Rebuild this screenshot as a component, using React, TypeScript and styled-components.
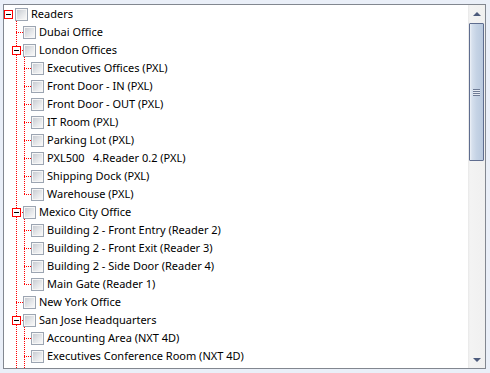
import React from 'react';
import styled, { createGlobalStyle, css } from 'styled-components';

const Global = createGlobalStyle`
  html, body { margin: 0; padding: 0; background: #eaeff8; }
  body { font-family: 'Noto Sans', 'Segoe UI', sans-serif; }
  * { box-sizing: border-box; }
`;

type TreeNode = { label: string; expanded?: boolean; children?: TreeNode[] };

const data: TreeNode = {
  label: 'Readers',
  expanded: true,
  children: [
    { label: 'Dubai Office' },
    {
      label: 'London Offices',
      expanded: true,
      children: [
        { label: 'Executives Offices (PXL)' },
        { label: 'Front Door - IN (PXL)' },
        { label: 'Front Door - OUT (PXL)' },
        { label: 'IT Room (PXL)' },
        { label: 'Parking Lot (PXL)' },
        { label: 'PXL500   4.Reader 0.2 (PXL)' },
        { label: 'Shipping Dock (PXL)' },
        { label: 'Warehouse (PXL)' },
      ],
    },
    {
      label: 'Mexico City Office',
      expanded: true,
      children: [
        { label: 'Building 2 - Front Entry (Reader 2)' },
        { label: 'Building 2 - Front Exit (Reader 3)' },
        { label: 'Building 2 - Side Door (Reader 4)' },
        { label: 'Main Gate (Reader 1)' },
      ],
    },
    { label: 'New York Office' },
    {
      label: 'San Jose Headquarters',
      expanded: true,
      children: [
        { label: 'Accounting Area (NXT 4D)' },
        { label: 'Executives Conference Room (NXT 4D)' },
        { label: 'Front Lobby (NXT 4D)' },
      ],
    },
    { label: 'Tokyo Office' },
  ],
};

const DOT = '#ff0000';
const vDots = `repeating-linear-gradient(to bottom, ${DOT} 0 1px, transparent 1px 2px)`;
const hDots = `repeating-linear-gradient(to right, ${DOT} 0 1px, transparent 1px 2px)`;

const Page = styled.div`
  height: 373px;
  padding: 4px 4px 4px 3px;
`;

const Frame = styled.div`
  display: flex;
  height: 100%;
  border: 1px solid #828790;
  background: #ffffff;
`;

const TreeView = styled.div`
  flex: 1;
  overflow: hidden;
  color: #000;
  font-size: 11px;
`;

const Row = styled.div`
  display: flex;
  height: 18px;
`;

const Guide = styled.div<{ $line: boolean }>`
  width: 8px;
  flex: none;
  ${(p) =>
    p.$line &&
    css`
      background: ${vDots} 4px 0 / 1px 100% no-repeat;
    `}
`;

const Branch = styled.div<{ $root: boolean; $last: boolean }>`
  width: 11px;
  flex: none;
  display: flex;
  align-items: flex-start;
  padding-top: 5px;
  ${(p) =>
    !p.$root &&
    css`
      background: ${hDots} 4px 9px / 7px 1px no-repeat,
        ${vDots} 4px 0 / 1px ${p.$last ? '10px' : '100%'} no-repeat;
    `}
`;

const Expander = styled.div`
  width: 9px;
  height: 9px;
  border: 1px solid #ff0000;
  background: #ffffff;
  display: flex;
  align-items: center;
  justify-content: center;
  &::before {
    content: '';
    width: 5px;
    height: 1px;
    background: #000000;
  }
`;

const CheckCell = styled.div`
  width: 13px;
  flex: none;
  display: flex;
  flex-direction: column;
  padding-top: 3px;
`;

const CheckBox = styled.div`
  width: 13px;
  height: 13px;
  flex: none;
  border: 1px solid #9ca5b2;
  background: #f6f6f6;
  padding: 1px;
  &::before {
    content: '';
    display: block;
    width: 100%;
    height: 100%;
    background: linear-gradient(135deg, #c8ccd2 0%, #e4e6e9 55%, #f8f8f8 100%);
  }
`;

const Stub = styled.div<{ $line: boolean }>`
  flex: 1;
  ${(p) =>
    p.$line &&
    css`
      background: ${vDots} 1px 0 / 1px 100% no-repeat;
    `}
`;

const Label = styled.span`
  margin-left: 3px;
  line-height: 18px;
  white-space: pre;
`;

const ScrollBar = styled.div`
  width: 17px;
  flex: none;
  display: flex;
  flex-direction: column;
  background: linear-gradient(to right, #e8e8e8 0, #f3f3f3 2px, #f0f0f0 100%);
`;

const ArrowButton = styled.div`
  height: 17px;
  flex: none;
  display: flex;
  align-items: center;
  justify-content: center;
`;

const Arrow = styled.div<{ $dir: 'up' | 'down' }>`
  width: 0;
  height: 0;
  border-left: 4px solid transparent;
  border-right: 4px solid transparent;
  ${(p) =>
    p.$dir === 'up'
      ? css`
          border-bottom: 4px solid #4d5b7c;
        `
      : css`
          border-top: 4px solid #4d5b7c;
        `}
`;

const Track = styled.div`
  flex: 1;
  display: flex;
  flex-direction: column;
  padding: 1px 1px 0 1px;
`;

const Thumb = styled.div`
  height: 138px;
  flex: none;
  border: 1px solid #5f6d8f;
  border-radius: 1px;
  background: linear-gradient(to right, #eef2f8 0, #d6e0ed 2px, #c5d3e5 50%, #b9c9de 100%);
  display: flex;
  align-items: center;
  justify-content: center;
`;

const Grip = styled.div`
  width: 7px;
  height: 7px;
  background: repeating-linear-gradient(to bottom, #6e7b95 0 1px, #e6ebf3 1px 2px);
`;

type Flat = { node: TreeNode; depth: number; guides: boolean[]; last: boolean };

function flatten(node: TreeNode, depth: number, guides: boolean[], last: boolean, out: Flat[]) {
  out.push({ node, depth, guides, last });
  if (node.expanded && node.children) {
    node.children.forEach((c, i) => {
      const isLast = i === node.children!.length - 1;
      const g = depth === 0 ? [] : [...guides, !last];
      flatten(c, depth + 1, g, isLast, out);
    });
  }
}

const rows: Flat[] = [];
flatten(data, 0, [], true, rows);

export default function App() {
  return (
    <>
      <Global />
      <Page>
        <Frame>
          <TreeView>
            {rows.map((r, i) => {
              const hasKids = !!(r.node.children && r.node.children.length);
              return (
                <Row key={i}>
                  {r.depth > 0 && <Guide $line={false} />}
                  {r.guides.map((g, j) => (
                    <Guide key={j} $line={g} />
                  ))}
                  <Branch $root={r.depth === 0} $last={r.last}>
                    {hasKids && <Expander />}
                  </Branch>
                  <CheckCell>
                    <CheckBox />
                    <Stub $line={!!(hasKids && r.node.expanded)} />
                  </CheckCell>
                  <Label>{r.node.label}</Label>
                </Row>
              );
            })}
          </TreeView>
          <ScrollBar>
            <ArrowButton>
              <Arrow $dir="up" />
            </ArrowButton>
            <Track>
              <Thumb>
                <Grip />
              </Thumb>
            </Track>
            <ArrowButton>
              <Arrow $dir="down" />
            </ArrowButton>
          </ScrollBar>
        </Frame>
      </Page>
    </>
  );
}
